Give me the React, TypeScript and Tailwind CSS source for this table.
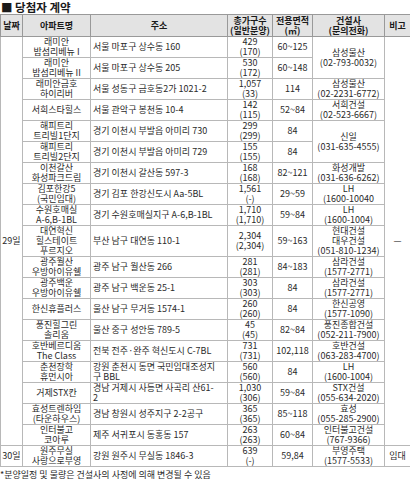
import React from "react";

interface Row {
  name: string[];
  addr: string[];
  total: [string, string];
  area: string;
  builder?: string[];
  builderSpan?: number;
  tall?: boolean;
}

const rows29: Row[] = [
  { name: ["래미안", "밤섬리베뉴 I"], addr: ["서울 마포구 상수동 160"], total: ["429", "(170)"], area: "60~125", builder: ["삼성물산", "(02-793-0032)"], builderSpan: 2 },
  { name: ["래미안", "밤섬리베뉴 II"], addr: ["서울 마포구 상수동 205"], total: ["530", "(172)"], area: "60~148" },
  { name: ["래미안금호", "하이리버"], addr: ["서울 성동구 금호동2가 1021-2"], total: ["1,057", "(33)"], area: "114", builder: ["삼성물산", "(02-2231-6772)"] },
  { name: ["서희스타힐스"], addr: ["서울 관악구 봉천동 10-4"], total: ["142", "(115)"], area: "52~84", builder: ["서희건설", "(02-523-6667)"] },
  { name: ["해피트리", "트리빌1단지"], addr: ["경기 이천시 부발읍 아미리 730"], total: ["299", "(299)"], area: "84", builder: ["신일", "(031-635-4555)"], builderSpan: 2 },
  { name: ["해피트리", "트리빌2단지"], addr: ["경기 이천시 부발읍 아미리 729"], total: ["155", "(155)"], area: "84" },
  { name: ["이천갈산", "화성파크드림"], addr: ["경기 이천시 갈산동 597-3"], total: ["168", "(168)"], area: "82~121", builder: ["화성개발", "(031-636-6262)"] },
  { name: ["김포한강5", "(국민임대)"], addr: ["경기 김포 한강신도시 Aa-5BL"], total: ["1,561", "(-)"], area: "29~59", builder: ["LH", "(1600-10040"] },
  { name: ["수원호매실", "A-6,B-1BL"], addr: ["경기 수원호매실지구 A-6,B-1BL"], total: ["1,710", "(1,710)"], area: "59~84", builder: ["LH", "(1600-1004)"] },
  { name: ["대연혁신", "힐스테이트", "푸르지오"], addr: ["부산 남구 대연동 110-1"], total: ["2,304", "(2,304)"], area: "59~163", builder: ["현대건설", "대우건설", "(051-810-1234)"], tall: true },
  { name: ["광주월산", "우방아이유쉘"], addr: ["광주 남구 월산동 266"], total: ["281", "(281)"], area: "84~183", builder: ["삼라건설", "(1577-2771)"] },
  { name: ["광주백운", "우방아이유쉘"], addr: ["광주 남구 백운동 25-1"], total: ["303", "(303)"], area: "84", builder: ["삼라건설", "(1577-2771)"] },
  { name: ["한신휴플러스"], addr: ["울산 남구 무거동 1574-1"], total: ["260", "(260)"], area: "84", builder: ["한신공영", "(1577-1090)"] },
  { name: ["풍진힐그린", "솔리움"], addr: ["울산 중구 성안동 789-5"], total: ["45", "(45)"], area: "82~84", builder: ["풍진종합건설", "(052-211-7900)"] },
  { name: ["호반베르디움", "The Class"], addr: ["전북 전주·완주 혁신도시 C-7BL"], total: ["731", "(731)"], area: "102,118", builder: ["호반건설", "(063-283-4700)"] },
  { name: ["춘천장학", "휴먼시아"], addr: ["강원 춘천시 동면 국민임대조성지", "구 BBL"], total: ["560", "(560)"], area: "84", builder: ["LH", "(1600-1004)"] },
  { name: ["거제STX칸"], addr: ["경남 거제시 사등면 사곡리 산61-", "2"], total: ["1,030", "(306)"], area: "59~84", builder: ["STX건설", "(055-634-2020)"] },
  { name: ["효성트렌하임", "(타운하우스)"], addr: ["경남 창원시 성주지구 2-2공구"], total: ["365", "(365)"], area: "85~118", builder: ["효성", "(055-285-2900)"] },
  { name: ["인터불고", "코아루"], addr: ["제주 서귀포시 동홍동 157"], total: ["263", "(263)"], area: "60~84", builder: ["인터불고건설", "(767-9366)"] },
];

const row30: Row = {
  name: ["원주무실", "사랑으로부영"],
  addr: ["강원 원주시 무실동 1846-3"],
  total: ["639", "(-)"],
  area: "59,84",
  builder: ["부영주택", "(1577-5533)"],
};

// 셀 공통 스타일
const cell = "border border-[#b8b8b8] p-0 align-middle";
const head = "border border-[#999] p-0 align-middle";

function Lines({ items }: { items: string[] }) {
  return (
    <>
      {items.map((t, i) => (
        <div key={i}>{t}</div>
      ))}
    </>
  );
}

function DataCells({ row }: { row: Row }) {
  return (
    <>
      <td className={`${cell} text-center`}>
        <Lines items={row.name} />
      </td>
      <td className={`${cell} text-left pl-[2px]`}>
        <Lines items={row.addr} />
      </td>
      <td className={`${cell} text-center`}>
        <Lines items={row.total} />
      </td>
      <td className={`${cell} text-center`}>{row.area}</td>
      {row.builder && (
        <td className={`${cell} text-center`} rowSpan={row.builderSpan ?? 1}>
          <Lines items={row.builder} />
        </td>
      )}
    </>
  );
}

export default function App() {
  return (
    <div
      className="w-[410px] h-[480px] bg-white text-[#2a2a2a] overflow-hidden"
      style={{ fontFamily: '"Noto Sans CJK KR", "Noto Sans", sans-serif' }}
    >
      <div className="h-[14px] pl-[1px] text-[11.5px] leading-[14px] font-bold text-[#1a1a1a]">■ 당첨자 계약</div>

      <table className="w-[410px] table-fixed border-collapse border border-[#888] text-[9px] leading-[10px]">
        <colgroup>
          <col className="w-[22px]" />
          <col className="w-[68px]" />
          <col className="w-[137px]" />
          <col className="w-[45px]" />
          <col className="w-[40px]" />
          <col className="w-[72px]" />
          <col className="w-[26px]" />
        </colgroup>
        <thead>
          <tr className="h-[22px] bg-[#e3e3e3] font-bold text-[#1a1a1a]">
            <th className={head}>날짜</th>
            <th className={head}>아파트명</th>
            <th className={head}>주소</th>
            <th className={head}>
              <div>총가구수</div>
              <div>(일반분양)</div>
            </th>
            <th className={head}>
              <div>전용면적</div>
              <div>(㎡)</div>
            </th>
            <th className={head}>
              <div>건설사</div>
              <div>(문의전화)</div>
            </th>
            <th className={head}>비고</th>
          </tr>
        </thead>
        <tbody>
          {rows29.map((row, i) => (
            <tr key={i} className={row.tall ? "h-[30px]" : "h-[21px]"}>
              {i === 0 && (
                <td className={`${cell} text-center`} rowSpan={rows29.length}>
                  29일
                </td>
              )}
              <DataCells row={row} />
              {i === 0 && (
                <td className={`${cell} text-center`} rowSpan={rows29.length}>
                  —
                </td>
              )}
            </tr>
          ))}
          <tr className="h-[21px]">
            <td className={`${cell} text-center`}>30일</td>
            <DataCells row={row30} />
            <td className={`${cell} text-center`}>임대</td>
          </tr>
        </tbody>
      </table>

      <div className="h-[15px] text-[9px] leading-[15px]">
        *분양일정 및 물량은 건설사의 사정에 의해 변경될 수 있음
      </div>
    </div>
  );
}
